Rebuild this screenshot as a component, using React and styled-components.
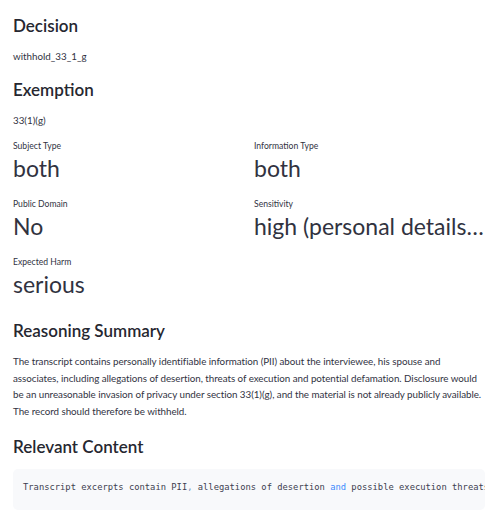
import React from 'react';
import styled, { createGlobalStyle } from 'styled-components';

const GlobalStyle = createGlobalStyle`
  body {
    margin: 0;
    background: #ffffff;
    color: #31333f;
    font-family: Lato, "Noto Sans", sans-serif;
  }
`;

const Page = styled.div`
  padding: 11px 16px 0 13px;
  display: flex;
  flex-direction: column;
`;

const Heading = styled.h3`
  margin: 0;
  font-size: 17px;
  font-weight: 600;
  line-height: 24px;
  color: #262730;
  padding: 3px 0;
`;

const Text = styled.p`
  margin: 7px 0 ${(p) => p.$after || 10}px;
  font-size: 9.8px;
  line-height: 16.6px;
  color: #31333f;
`;

const Summary = styled(Text)`
  white-space: nowrap;
  letter-spacing: -0.04px;
`;

const MetricGrid = styled.div`
  display: grid;
  grid-template-columns: 1fr 1fr;
  column-gap: 10px;
  row-gap: 13px;
  margin: 1px 0 16px;
`;

const Metric = styled.div`
  display: flex;
  flex-direction: column;
  min-width: 0;
`;

const MetricLabel = styled.div`
  font-size: 8.6px;
  line-height: 14px;
  color: #31333f;
`;

const MetricValue = styled.div`
  font-size: 23px;
  line-height: 31px;
  color: #31333f;
  white-space: nowrap;
  overflow: hidden;
  text-overflow: ellipsis;
`;

const CodeBlock = styled.pre`
  margin: 7px 0 0;
  background: #f8f9fb;
  border-radius: 5px;
  padding: 10px 0 14px 10px;
  overflow: hidden;
  font-family: "DejaVu Sans Mono", "Liberation Mono", monospace;
  font-size: 8.8px;
  line-height: 17px;
  color: #3d4050;
  white-space: pre;
`;

const Keyword = styled.span`
  color: ${(p) => p.$tone};
`;

const metrics = [
  ['Subject Type', 'both'],
  ['Information Type', 'both'],
  ['Public Domain', 'No'],
  ['Sensitivity', 'high (personal details of interviewee and associates)'],
  ['Expected Harm', 'serious'],
];

export default function App() {
  return (
    <>
      <GlobalStyle />
      <Page>
        <Heading>Decision</Heading>
        <Text>withhold_33_1_g</Text>
        <Heading>Exemption</Heading>
        <Text>33(1)(g)</Text>
        <MetricGrid>
          {metrics.map(([label, value]) => (
            <Metric key={label}>
              <MetricLabel>{label}</MetricLabel>
              <MetricValue>{value}</MetricValue>
            </Metric>
          ))}
        </MetricGrid>
        <Heading>Reasoning Summary</Heading>
        <Summary $after={12}>
          The transcript contains personally identifiable information (PII) about the interviewee, his spouse and
          <br />
          associates, including allegations of desertion, threats of execution and potential defamation. Disclosure would
          <br />
          be an unreasonable invasion of privacy under section 33(1)(g), and the material is not already publicly available.
          <br />
          The record should therefore be withheld.
        </Summary>
        <Heading>Relevant Content</Heading>
        <CodeBlock>
          Transcript excerpts contain PII<Keyword $tone="#6e8fb8">,</Keyword> allegations of desertion{' '}
          <Keyword $tone="#3d8bfd">and</Keyword> possible execution threats
        </CodeBlock>
      </Page>
    </>
  );
}
